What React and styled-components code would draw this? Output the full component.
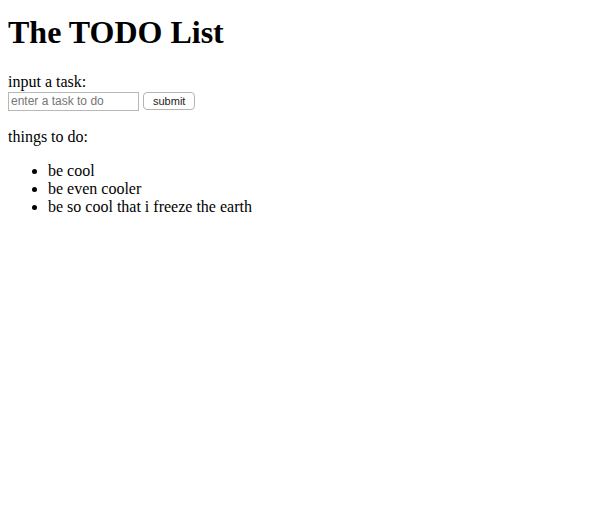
import styled, { createGlobalStyle } from 'styled-components'

const GlobalStyle = createGlobalStyle`
    body {
        margin: 0;
        background: #fff;
        color: #000;
        font-family: "Liberation Serif", "Times New Roman", serif;
        font-size: 16px;
        line-height: 18px;
    }
`

const Page = styled.div`
    padding: 14px 8px 0;
`

const Title = styled.h1`
    margin: 0 0 21.5px;
    font-size: 32px;
    line-height: 37px;
    font-weight: bold;
`

const Label = styled.label`
    display: block;
`

const TaskRow = styled.form`
    display: flex;
    align-items: center;
    gap: 4px;
    height: 21px;
    margin: 0;
`

const TaskInput = styled.input`
    box-sizing: border-box;
    width: 131px;
    height: 19px;
    margin: 0;
    padding: 0 2px;
    border: 1px solid #b8b8b8;
    font-family: "Liberation Sans", Arial, sans-serif;
    font-size: 12px;
    outline: none;

    &::placeholder {
        color: #767676;
    }
`

const SubmitButton = styled.button`
    box-sizing: border-box;
    height: 18px;
    margin: 0;
    padding: 0 9px;
    background: #fff;
    border: 1px solid #b4b4b4;
    border-radius: 4px;
    color: #222;
    font-family: "Liberation Sans", Arial, sans-serif;
    font-size: 11px;
    line-height: 16px;
`

const Heading = styled.p`
    margin: 16px 0;
`

const TaskList = styled.ul`
    margin: 16px 0;
    padding-left: 40px;
    list-style: disc;
`

const tasks = ['be cool', 'be even cooler', 'be so cool that i freeze the earth']

function App() {
    return (
        <>
            <GlobalStyle />
            <Page>
                <Title>The TODO List</Title>
                <Label htmlFor='task'>input a task:</Label>
                <TaskRow onSubmit={e => e.preventDefault()}>
                    <TaskInput id='task' placeholder='enter a task to do' />
                    <SubmitButton type='submit'>submit</SubmitButton>
                </TaskRow>
                <Heading>things to do:</Heading>
                <TaskList>
                    {tasks.map(task => <li key={task}>{task}</li>)}
                </TaskList>
            </Page>
        </>
    )
}

export default App
